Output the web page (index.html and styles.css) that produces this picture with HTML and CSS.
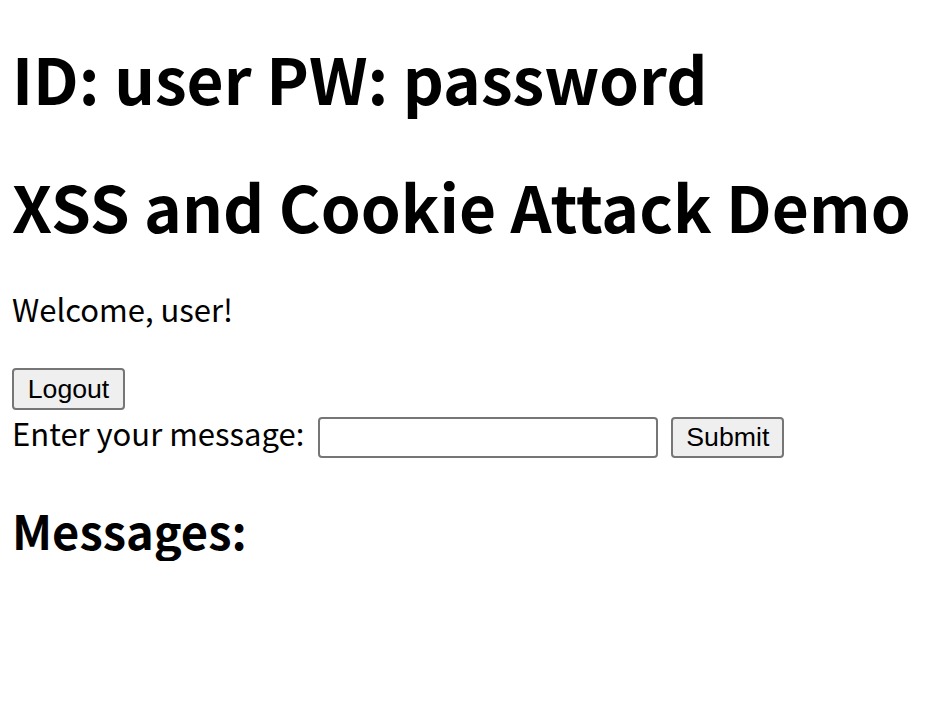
FILE: index.html
```html
<!DOCTYPE html>
<html lang="en">
<head>
<meta charset="utf-8">
<title>XSS and Cookie Attack Demo</title>
<link rel="stylesheet" href="styles.css">
</head>
<body>
  <h1 class="title title-first">ID: user PW: password</h1>
  <h1 class="title title-second">XSS and Cookie Attack Demo</h1>
  <p class="welcome">Welcome, user!</p>
  <form class="logout-form">
    <button type="button" class="btn">Logout</button>
  </form>
  <form class="message-form">
    <label class="message-label" for="msg">Enter your message:</label>
    <input class="message-input" id="msg" type="text">
    <button type="button" class="btn btn-submit">Submit</button>
  </form>
  <h2 class="messages-title">Messages:</h2>
  <div class="messages"></div>
</body>
</html>
```
FILE: styles.css
```css
html, body {
  background: #ffffff;
}

body {
  margin: 0;
  padding: 0 12px;
  color: #000000;
  font-family: "Noto Sans CJK KR", "Noto Sans", sans-serif;
}

.title {
  margin: 0;
  font-size: 64px;
  font-weight: 700;
  line-height: 85px;
}

.title-first {
  margin-top: 35px;
}

.title-second {
  margin-top: 43px;
}

.welcome {
  margin: 40px 0 0;
  font-size: 31px;
  line-height: 42px;
}

.logout-form {
  margin: 38px 0 0;
  display: flex;
}

.btn {
  box-sizing: border-box;
  width: 113px;
  height: 42px;
  margin: 0;
  padding: 0;
  display: flex;
  align-items: center;
  justify-content: center;
  background: #efefef;
  border: 2px solid #767676;
  border-radius: 4px;
  color: #000000;
  font-family: "Liberation Sans", Arial, sans-serif;
  font-size: 26.67px;
  line-height: 1;
}

.message-form {
  margin: 7px 0 0;
  display: flex;
  align-items: flex-start;
}

.message-label {
  font-size: 31px;
  line-height: 31px;
  padding-bottom: 10px;
}

.message-input {
  box-sizing: border-box;
  width: 340px;
  height: 41px;
  margin: 0 0 0 14px;
  padding: 2px 4px;
  border: 2px solid #767676;
  border-radius: 4px;
  background: #ffffff;
  font-family: "Liberation Sans", Arial, sans-serif;
  font-size: 26.67px;
}

.btn-submit {
  height: 41px;
  margin-left: 13px;
}

.messages-title {
  margin: 41px 0 0;
  font-size: 47px;
  font-weight: 700;
  line-height: 62px;
}
```
